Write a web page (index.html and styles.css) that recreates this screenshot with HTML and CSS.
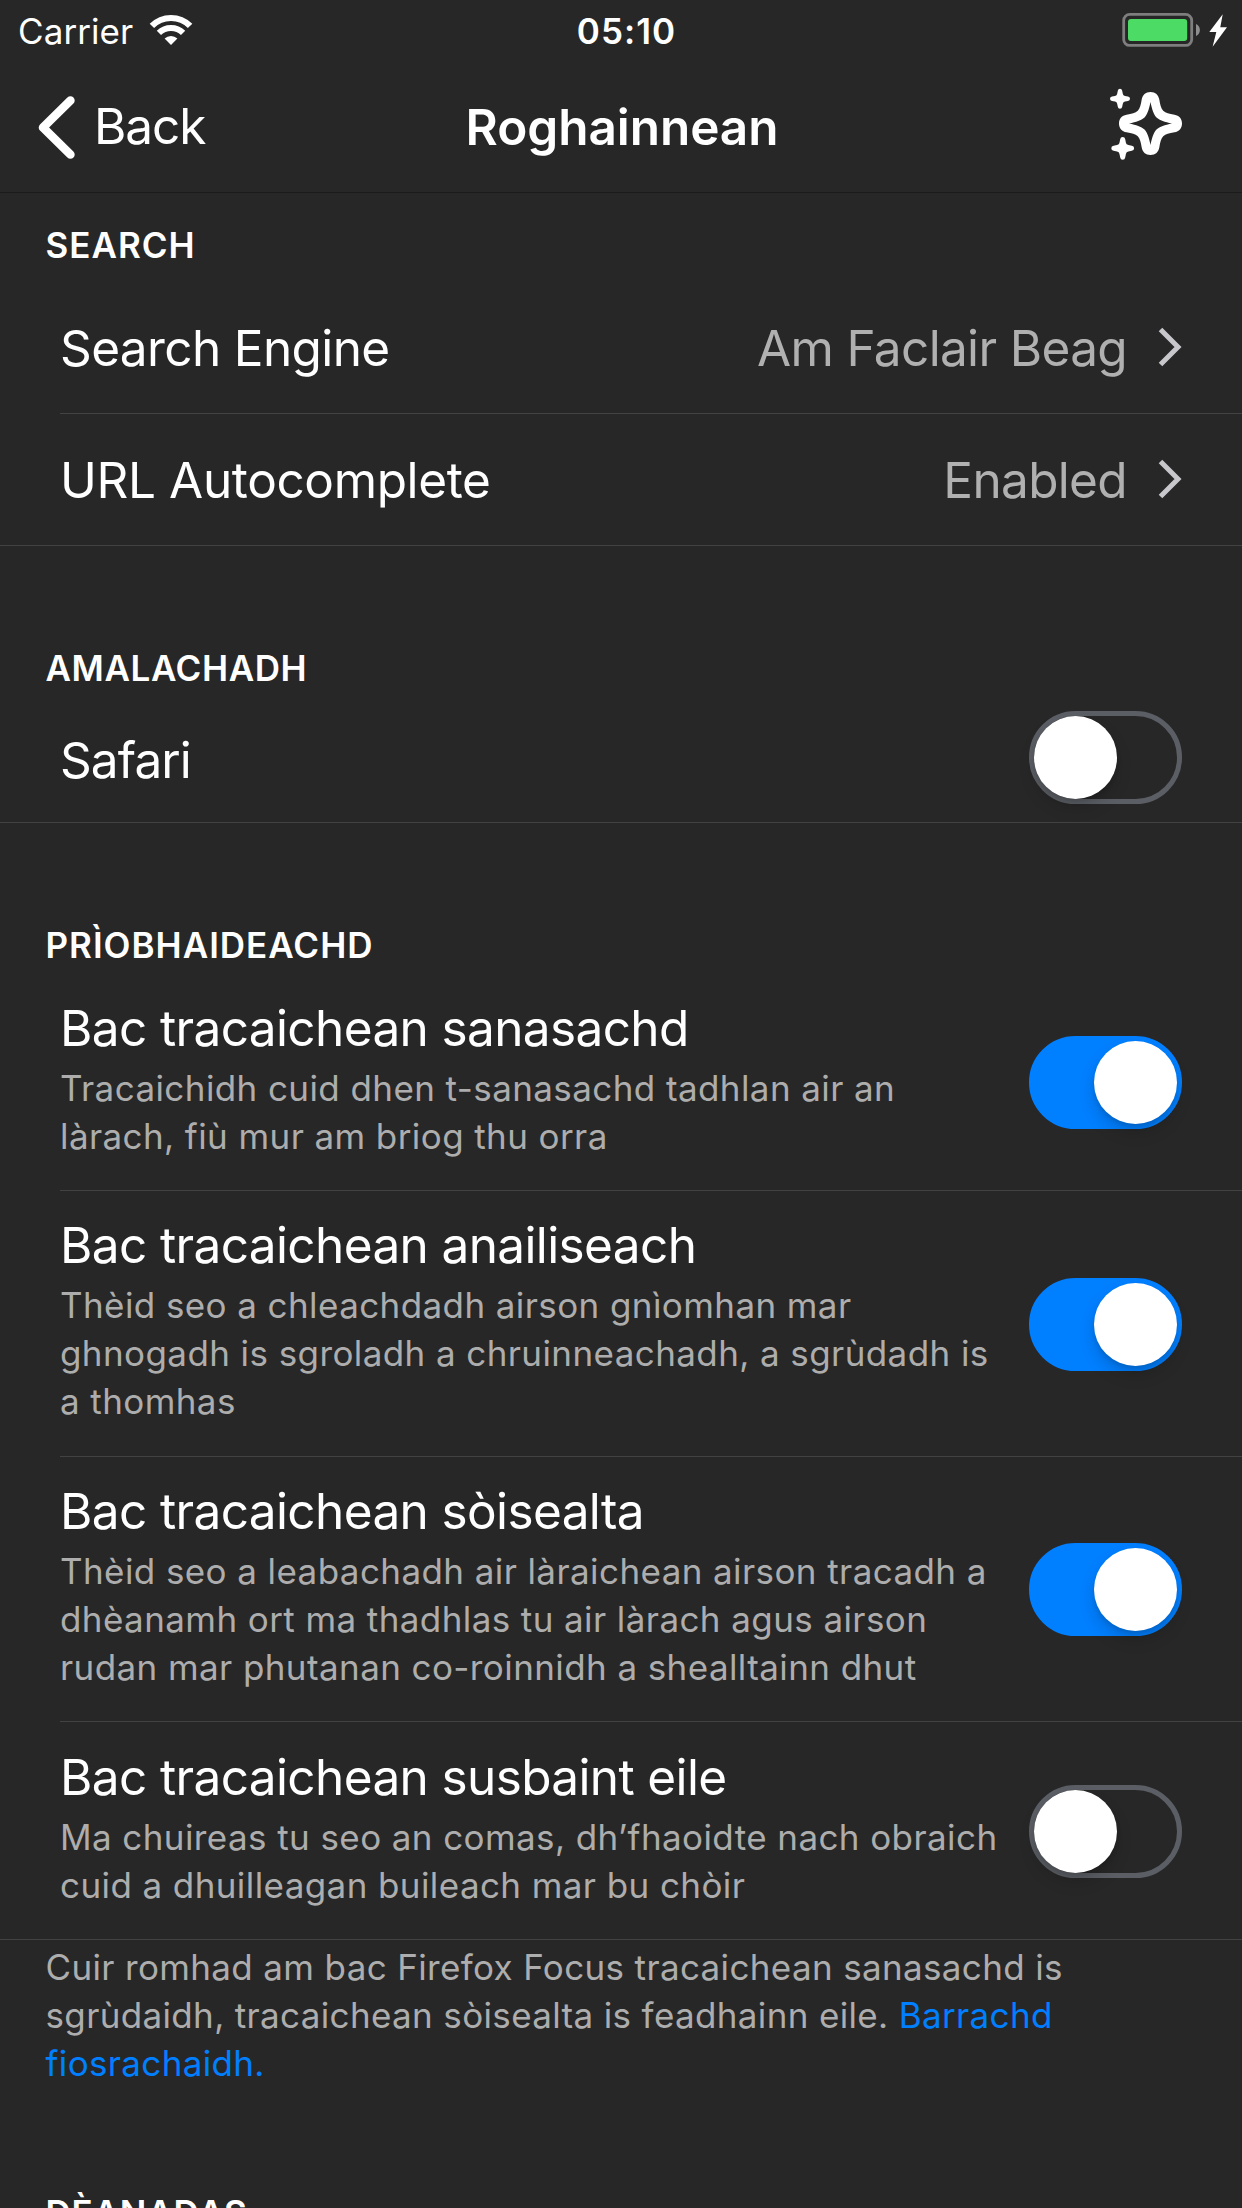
FILE: index.html
```
<!DOCTYPE html>
<html lang="gd">
<head>
<meta charset="utf-8">
<title>Roghainnean</title>
<link rel="stylesheet" href="styles.css">
</head>
<body>
<div class="status">
  <div class="status-left">
    <span class="carrier">Carrier</span>
    <svg class="wifi" width="44" height="32" viewBox="0 0 44 32" fill="none" stroke="#fff">
      <path d="M2.9 11.9A27 27 0 0 1 41.1 11.9" stroke-width="6.2"/>
      <path d="M9.9 18.9A17.1 17.1 0 0 1 34.1 18.9" stroke-width="6"/>
      <path d="M22 31L15.6 24.6A9.2 9.2 0 0 1 28.4 24.6Z" fill="#fff" stroke="none"/>
    </svg>
  </div>
  <span class="clock">05:10</span>
  <div class="status-right">
    <svg width="106" height="36" viewBox="0 0 106 36">
      <rect x="1.7" y="2.4" width="68" height="31" rx="6" fill="none" stroke="#7e7e7e" stroke-width="2.8"/>
      <rect x="6" y="7" width="59.2" height="22" rx="3" fill="#4cdb64"/>
      <path d="M74 12c5.2 2 5.2 10 0 12z" fill="#8e8e8e"/>
      <path d="M100.7 2.3L87.3 20h7l-3.7 14.7L105 15.3h-6.700z" fill="#fff"/>
    </svg>
  </div>
</div>
<header class="nav">
  <div class="back">
    <svg width="37" height="63" viewBox="0 0 37 63" fill="none" stroke="#fff" stroke-width="8.600" stroke-linecap="round" stroke-linejoin="round"><path d="M32.400 4.500L5 31.500L32.400 58.500"/></svg>
    <span class="back-label">Back</span>
  </div>
  <h1 class="nav-title">Roghainnean</h1>
  <svg class="sparkle" width="74" height="72" viewBox="0 0 74 72" fill="#fff">
    <path fill-rule="evenodd" transform="translate(41.500 35.500)" d="M0-31.500C5-31.500 8-28.500 8.800-24C9.700-18.500 10.500-15.300 12.700-12.700C15.300-10.500 18.500-9.700 24-8.800C28.500-8 31.500-5 31.500 0C31.500 5 28.500 8 24 8.800C18.500 9.700 15.300 10.500 12.700 12.700C10.500 15.300 9.700 18.500 8.800 24C8 28.500 5 31.500 0 31.500C-5 31.500-8 28.500-8.800 24C-9.700 18.500-10.500 15.300-12.700 12.700C-15.300 10.500-18.500 9.700-24 8.800C-28.500 8-31.500 5-31.500 0C-31.500-5-28.500-8-24-8.800C-18.500-9.700-15.300-10.500-12.700-12.700C-10.500-15.300-9.700-18.500-8.800-24C-8-28.500-5-31.500 0-31.500ZM0-21.500C-1.500-14-3-9.500-6-6C-9.500-3-14-1.500-21.500 0C-14 1.500-9.500 3-6 6C-3 9.500-1.500 14 0 21.500C1.500 14 3 9.500 6 6C9.500 3 14 1.500 21.500 0C14-1.500 9.500-3 6-6C3-9.500 1.500-14 0-21.500Z"/>
    <path transform="translate(11 10.800)" d="M-2.200-8Q-1.900-10 0-10T2.200-8Q2.800-4.200 3.500-3.500T8-2.200Q10-1.900 10 0T8 2.200Q4.200 2.800 3.500 3.500T2.200 8Q1.900 10 0 10T-2.200 8Q-2.800 4.200-3.500 3.500T-8 2.200Q-10 1.900-10 0T-8-2.200Q-4.200-2.800-3.500-3.500T-2.200-8Z"/>
    <path transform="translate(13.700 60.300) scale(1.140)" d="M-2.200-8Q-1.900-10 0-10T2.200-8Q2.800-4.200 3.500-3.500T8-2.200Q10-1.900 10 0T8 2.200Q4.200 2.800 3.500 3.500T2.200 8Q1.900 10 0 10T-2.200 8Q-2.800 4.200-3.500 3.500T-8 2.200Q-10 1.900-10 0T-8-2.200Q-4.200-2.800-3.500-3.500T-2.200-8Z"/>
  </svg>
</header>
<main>
  <section>
    <h2 class="heading heading-first">SEARCH</h2>
    <div class="group">
      <div class="row row-link">
        <span class="label">Search Engine</span>
        <span class="value">Am Faclair Beag</span>
        <svg class="chevron" width="24" height="40" viewBox="0 0 24 40"><path d="M2.500 2.500L20 20L2.500 37.500"/></svg>
      </div>
      <div class="row row-link">
        <span class="label label-url">URL Autocomplete</span>
        <span class="value">Enabled</span>
        <svg class="chevron" width="24" height="40" viewBox="0 0 24 40"><path d="M2.500 2.500L20 20L2.500 37.500"/></svg>
      </div>
    </div>
  </section>
  <section>
    <h2 class="heading heading-safari">AMALACHADH</h2>
    <div class="group">
      <div class="row row-safari">
        <span class="label label-safari">Safari</span>
        <span class="switch"></span>
      </div>
    </div>
  </section>
  <section>
    <h2 class="heading heading-privacy">PRÌOBHAIDEACHD</h2>
    <div class="group">
      <div class="row row-ads">
        <div class="copy"><div class="label">Bac tracaichean sanasachd</div>
        <p class="desc">Tracaichidh cuid dhen t-sanasachd tadhlan air an<br>làrach, fiù mur am briog thu orra</p></div>
        <span class="switch on"></span>
      </div>
      <div class="row row-analytics">
        <div class="copy"><div class="label">Bac tracaichean anailiseach</div>
        <p class="desc">Thèid seo a chleachdadh airson gnìomhan mar<br>ghnogadh is sgroladh a chruinneachadh, a sgrùdadh is<br>a thomhas</p></div>
        <span class="switch on"></span>
      </div>
      <div class="row row-social">
        <div class="copy"><div class="label">Bac tracaichean sòisealta</div>
        <p class="desc">Thèid seo a leabachadh air làraichean airson tracadh a<br>dhèanamh ort ma thadhlas tu air làrach agus airson<br>rudan mar phutanan co-roinnidh a shealltainn dhut</p></div>
        <span class="switch on"></span>
      </div>
      <div class="row row-other">
        <div class="copy"><div class="label">Bac tracaichean susbaint eile</div>
        <p class="desc">Ma chuireas tu seo an comas, dh’fhaoidte nach obraich<br>cuid a dhuilleagan buileach mar bu chòir</p></div>
        <span class="switch"></span>
      </div>
    </div>
    <p class="footnote">Cuir romhad am bac Firefox Focus tracaichean sanasachd is<br>sgrùdaidh, tracaichean sòisealta is feadhainn eile. <a class="more">Barrachd<br>fiosrachaidh.</a></p>
  </section>
  <section>
    <h2 class="heading heading-performance">DÈANADAS</h2>
  </section>
</main>
</body>
</html>
```

FILE: styles.css
```
* { box-sizing: border-box; }
html, body { margin: 0; height: 2208px; overflow: hidden; }
body {
  width: 1242px;
  background: #272727;
  color: #fff;
  font-family: Inter, "Liberation Sans", sans-serif;
}
h1, h2, p { margin: 0; font-weight: 400; }
svg { display: block; flex: none; }

.status {
  display: grid;
  grid-template-columns: 1fr auto 1fr;
  align-items: center;
  height: 62px;
  padding: 0 14px 0 18px;
  font-size: 35px;
  line-height: 60px;
}
.status-left { display: flex; align-items: center; gap: 16px; }
.status-right { display: flex; justify-content: flex-end; margin-bottom: 2px; }
.carrier { letter-spacing: 0.08px; }
.wifi { margin-bottom: 3px; }
.clock { font-weight: 600; letter-spacing: 1.06px; margin-right: -7px; }

.nav {
  display: grid;
  grid-template-columns: 1fr auto 1fr;
  align-items: center;
  height: 131px;
  padding: 0 59px 0 38px;
  border-bottom: 1px solid #1b1b1b;
  font-size: 49.5px;
  line-height: 60px;
}
.back { display: flex; align-items: center; gap: 19px; }
.back-label { letter-spacing: -1.1px; padding-bottom: 2px; }
.nav-title { font-size: 49.5px; font-weight: 600; letter-spacing: -0.05px; margin-right: -23px; }
.sparkle { justify-self: end; margin-bottom: 6px; }

.heading {
  padding-left: 45.5px;
  font-size: 35px;
  font-weight: 600;
  line-height: 48px;
  letter-spacing: 1px;
}
.heading-first { height: 89px; padding-top: 28px; }
.heading-safari { height: 145px; padding-top: 98px; letter-spacing: 0.6px; }
.heading-privacy { height: 152px; padding-top: 98px; }
.heading-performance { padding-top: 102px; letter-spacing: 0.8px; }

.group { border-bottom: 1px solid #424242; }
.row {
  display: flex;
  align-items: center;
  margin-left: 60px;
  padding-right: 60px;
  border-bottom: 1px solid #424242;
}
.row:last-child { border-bottom: 0; }
.label {
  font-size: 49.5px;
  line-height: 60px;
  letter-spacing: -0.62px;
  white-space: nowrap;
}
.label-url { letter-spacing: -0.37px; }
.label-safari { padding-top: 6px; letter-spacing: -0.9px; }
.value {
  margin-left: auto;
  margin-right: 31px;
  color: #b0b0b0;
  font-size: 49.5px;
  line-height: 60px;
  letter-spacing: -0.65px;
}
.chevron { fill: none; stroke: #c7c7cc; stroke-width: 5; margin-bottom: 2px; }

.row-link { height: 132px; }
.row-link:last-child { height: 131px; }
.row-safari { height: 131px; }
.row-safari .switch { margin-top: 2px; }
.row-ads { height: 216px; }
.row-ads .copy { padding-top: 23px; }
.row-analytics { height: 266px; }
.row-social { height: 265px; }
.row-other { height: 217px; }
.row-analytics .switch, .row-social .switch, .row-other .switch { margin-top: 1px; }
.copy { align-self: flex-start; padding-top: 24px; }
.row-other .copy { padding-top: 25px; }
.desc {
  margin-top: 6px;
  color: #adadad;
  font-size: 35px;
  line-height: 48px;
  letter-spacing: 0.41px;
  white-space: nowrap;
}

.switch {
  flex: none;
  width: 153px;
  height: 93px;
  margin-left: auto;
  border: 5px solid #5b5f65;
  border-radius: 47px;
}
.switch::before {
  content: "";
  display: block;
  width: 83px;
  height: 83px;
  border-radius: 50%;
  background: #fff;
  box-shadow: 0 9px 16px rgba(0, 0, 0, 0.15), 0 3px 4px rgba(0, 0, 0, 0.1);
}
.switch.on { border-color: #007fff; background: #007fff; }
.switch.on::before { margin-left: 60px; }

.footnote {
  padding: 3px 0 0 45.5px;
  color: #adadad;
  font-size: 35px;
  line-height: 48px;
  letter-spacing: 0.35px;
  white-space: nowrap;
}
.more { color: #007fff; }
```
